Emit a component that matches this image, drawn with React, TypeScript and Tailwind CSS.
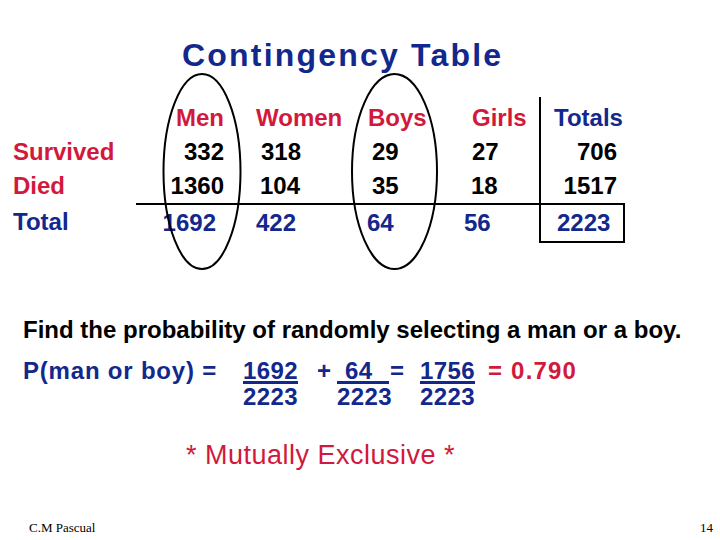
const RED = 'text-[#d2193c]'
const BLUE = 'text-[#13288c]'

const header = [
  { text: 'Men', cls: 'justify-end pr-[16px]' },
  { text: 'Women', cls: 'pl-[16px]' },
  { text: 'Boys', cls: 'pl-[18px]' },
  { text: 'Girls', cls: 'pl-[27px]' },
]

const rows = [
  {
    label: 'Survived',
    cells: [
      { text: '332', cls: 'justify-end pr-[16px]' },
      { text: '318', cls: 'pl-[21px]' },
      { text: '29', cls: 'pl-[22px]' },
      { text: '27', cls: 'pl-[27px]' },
    ],
    total: '706',
  },
  {
    label: 'Died',
    cells: [
      { text: '1360', cls: 'justify-end pr-[16px]' },
      { text: '104', cls: 'pl-[20px]' },
      { text: '35', cls: 'pl-[22px]' },
      { text: '18', cls: 'pl-[26px]' },
    ],
    total: '1517',
  },
]

const totals = [
  { text: '1692', cls: 'justify-end pr-[24px]' },
  { text: '422', cls: 'pl-[16px]' },
  { text: '64', cls: 'pl-[17px]' },
  { text: '56', cls: 'pl-[19px]' },
]

const Fraction = ({ top, width, pad, cls }: { top: string; width: string; pad?: string; cls: string }) => (
  <div className={`flex flex-col items-start ${width}`}>
    <span className={`leading-[21px] border-b-[3px] border-[#13288c] ${cls} ${pad ?? ''}`}>{top}</span>
    <span className="leading-[24px] mt-px">2223</span>
  </div>
)

export default function App() {
  return (
    <div className="relative w-[720px] h-[540px] bg-white overflow-hidden flex flex-col font-['Liberation_Sans',Arial,sans-serif] font-bold text-[24px] text-black">
      <h1 className={`mt-[39px] pl-[182px] text-[32px] leading-[32px] tracking-[2.2px] ${BLUE}`}>
        Contingency Table
      </h1>

      {/* table */}
      <div className="mt-[26px] grid grid-cols-[136px_104px_110px_95px_94px_86px] grid-rows-[38px_34px_34px_40px] w-[625px] leading-[34px]">
        <div />
        {header.map((h) => (
          <div key={h.text} className={`flex items-start pt-[4px] ${RED} ${h.cls}`}>
            {h.text}
          </div>
        ))}
        <div className={`border-l-2 border-black pl-[13px] pt-[4px] ${BLUE}`}>Totals</div>

        {rows.map((r) => (
          <div key={r.label} className="contents">
            <div className={`pl-[13px] ${RED}`}>{r.label}</div>
            {r.cells.map((c, i) => (
              <div key={i} className={`flex ${c.cls}`}>
                {c.text}
              </div>
            ))}
            <div className="border-l-2 border-black flex justify-end pr-[8px]">{r.total}</div>
          </div>
        ))}

        <div className={`pl-[13px] pt-[2px] ${BLUE}`}>Total</div>
        {totals.map((c, i) => (
          <div key={i} className={`flex border-t-2 border-black pt-px ${BLUE} ${c.cls}`}>
            {c.text}
          </div>
        ))}
        <div className={`border-2 border-black pl-[16px] pt-px leading-[34px] ${BLUE}`}>2223</div>
      </div>

      <p className="mt-[73px] pl-[23px] leading-[28px]">
        Find the probability of randomly selecting a man or a boy.
      </p>

      <div className={`mt-[16px] pl-[23px] flex items-start tracking-[0.4px] ${BLUE}`}>
        <div className="w-[220px] leading-[21px] tracking-[0.8px]">P(man or boy) =</div>
        <Fraction top="1692" width="w-[74px]" cls="" />
        <div className="w-[20px] leading-[21px]">+</div>
        <Fraction top="64" width="w-[53px]" cls="w-[52px]" pad="pl-[8px]" />
        <div className="w-[30px] leading-[21px]">=</div>
        <Fraction top="1756" width="w-[68px]" cls="" />
        <div className={`leading-[21px] tracking-[1.2px] ${RED}`}>=&nbsp;0.790</div>
      </div>

      <p className={`mt-[30px] pl-[186px] font-normal text-[27px] leading-[32px] tracking-[0.5px] ${RED}`}>
        * Mutually Exclusive *
      </p>

      <div className="mt-auto pb-[5px] pl-[29px] pr-[7px] flex justify-between font-['Liberation_Serif','Times_New_Roman',serif] font-normal text-[13px] leading-[15px]">
        <span>C.M Pascual</span>
        <span>14</span>
      </div>

      {/* ellipses drawn over the Men and Boys columns */}
      <svg className="absolute inset-0 pointer-events-none" width="720" height="540">
        <ellipse cx="202" cy="171.5" rx="38.5" ry="97.5" fill="none" stroke="black" strokeWidth="2" />
        <ellipse cx="394.5" cy="171.5" rx="42.5" ry="97.5" fill="none" stroke="black" strokeWidth="2" />
      </svg>
    </div>
  )
}
